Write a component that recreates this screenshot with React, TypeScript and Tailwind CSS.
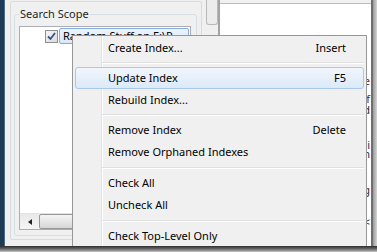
import React from 'react';

const font = { fontFamily: '"Noto Sans", "Open Sans", sans-serif' };

type Entry =
    | { kind: 'item'; label: string; key?: string; h: string; active?: boolean }
    | { kind: 'sep' };

const menuEntries: Entry[] = [
    { kind: 'item', label: 'Create Index...', key: 'Insert', h: 'h-[22px]' },
    { kind: 'sep' },
    { kind: 'item', label: 'Update Index', key: 'F5', h: 'h-[22px]', active: true },
    { kind: 'item', label: 'Rebuild Index...', h: 'h-[22px]' },
    { kind: 'sep' },
    { kind: 'item', label: 'Remove Index', key: 'Delete', h: 'h-[22px]' },
    { kind: 'item', label: 'Remove Orphaned Indexes', h: 'h-[23px]' },
    { kind: 'sep' },
    { kind: 'item', label: 'Check All', h: 'h-[22px]' },
    { kind: 'item', label: 'Uncheck All', h: 'h-[23px]' },
    { kind: 'sep' },
    { kind: 'item', label: 'Check Top-Level Only', h: 'h-[22px]' },
];

// bits of the text pane peeking out from behind the menu
const paneLines = [
    { mt: 'mt-[70px]', text: 'the', color: 'text-[#5b2a12]' },
    { mt: 'mt-[4px]', text: 'of', color: 'text-[#5b2a12]' },
    { mt: 'mt-[-3px]', text: 'and', color: 'text-[#2b2b3a]' },
    { mt: 'mt-[21px]', text: 'iii', color: 'text-[#1f2a5c]' },
    { mt: 'mt-[-5px]', text: 'in', color: 'text-[#1f2a5c]' },
    { mt: 'mt-[22px]', text: 'ng', color: 'text-[#2b2b3a]' },
    { mt: 'mt-[18px]', text: '<', color: 'text-[#1f2a5c]' },
];

function CheckBox() {
    return (
        <div className="w-[13px] h-[13px] border border-[#8e8f8f] bg-gradient-to-br from-[#f4f4f4] to-[#dcdcdc] flex items-center justify-center shrink-0">
            <svg width="9" height="9" viewBox="0 0 9 9">
                <path d="M1 4.5 L3.5 7 L8 1" fill="none" stroke="#3b4f8a" strokeWidth="1.8" />
            </svg>
        </div>
    );
}

function ContextMenu() {
    return (
        <div
            className="absolute left-[72px] top-[35px] w-[295px] h-[211px] overflow-hidden bg-[#f0f0f0] border-t border-l border-r border-[#979797] px-[2px] pt-[1px]"
            style={font}
        >
            {/* gutter line */}
            <div className="absolute left-[28px] top-0 bottom-0 w-[2px] border-l border-[#e2e3e3] bg-white" />
            <div className="relative flex flex-col">
                {menuEntries.map((e, i) =>
                    e.kind === 'sep' ? (
                        <div key={i} className="h-[8px] flex items-center pl-[27px]">
                            <div className="w-full h-[2px] border-t border-[#e0e0e0] bg-white" />
                        </div>
                    ) : (
                        <div
                            key={i}
                            className={`${e.h} flex items-center justify-between pl-[32px] pr-[17px] text-[11px] text-black rounded-[3px] border ${e.active
                                ? 'border-[#aac8ea] bg-gradient-to-b from-[#f1f6fd] to-[#dce9f8]'
                                : 'border-transparent'
                                }`}
                        >
                            <span>{e.label}</span>
                            {e.key && <span>{e.key}</span>}
                        </div>
                    )
                )}
            </div>
        </div>
    );
}

export default function App() {
    return (
        <div className="relative w-[377px] h-[252px] overflow-hidden bg-[#c9c9c9]" style={font}>
            <div className="flex h-[246px]">
                {/* aero frame */}
                <div className="w-[5px] bg-[#1d3a56] border-r border-[#4c6a85]" />

                {/* left panel */}
                <div className="w-[213px] bg-[#f0f0f0] flex items-start">
                    <div className="ml-[5px] mt-[1px] w-[192px] h-[239px] border border-[#dadada] rounded-[2px]">
                        <div className="relative ml-[3px] mt-[12px] w-[183px] h-[222px] border border-[#d5dfe5] rounded-[3px]">
                            <span className="absolute left-[4px] top-[-9px] px-[1px] bg-[#f0f0f0] text-[11px] leading-[16px] text-[#1e1e1e]">
                                Search Scope
                            </span>
                            <div className="ml-[4px] mt-[11px] w-[172px] h-[204px] border border-[#abadb3] bg-white flex flex-col">
                                <div className="flex items-center pt-[1px] h-[17px] ml-[25px]">
                                    <CheckBox />
                                    <div className="ml-[1px] w-[130px] h-[16px] border border-[#84acdd] rounded-[2px] bg-gradient-to-b from-[#ecf4fd] to-[#d9e8fb] pl-[3px] text-[11px] leading-[14px] text-black whitespace-nowrap overflow-hidden">
                                        Random Stuff on E:\P
                                    </div>
                                </div>
                                <div className="flex-1" />
                                {/* horizontal scrollbar */}
                                <div className="h-[16px] flex items-center bg-gradient-to-b from-[#e9e9e9] to-[#f5f5f5] border-t border-[#e2e2e2]">
                                    <div className="w-[19px] flex justify-center">
                                        <svg width="4" height="6" viewBox="0 0 4 6">
                                            <path d="M4 0 L0 3 L4 6 Z" fill="#222" />
                                        </svg>
                                    </div>
                                    <div className="flex-1 h-[15px] border border-[#979797] rounded-[2px] bg-gradient-to-b from-[#f5f5f5] to-[#d6d6d6]" />
                                </div>
                            </div>
                        </div>
                    </div>
                    {/* splitter grip */}
                    <div className="ml-[4px] w-[12px] h-[25px] border border-t-0 border-[#b9b9b9] rounded-b-[3px] bg-[#ececec]" />
                </div>

                <div className="w-[2px] bg-[#a3a3a3]" />

                {/* right pane */}
                <div className="w-[153px] bg-[#f0f0f0] pt-[3px] border-r-2 border-[#6f6f6f]">
                    <div className="h-full bg-white border-t border-[#bcbcbc] overflow-hidden flex flex-col items-end text-[11px] leading-[14px] pr-[1px]">
                        {paneLines.map((l, i) => (
                            <span key={i} className={`${l.mt} ${l.color}`}>{l.text}</span>
                        ))}
                    </div>
                </div>

                {/* drop shadow */}
                <div className="w-[4px] bg-gradient-to-r from-[#9a9a9a] to-[#d6d6d6]" />
            </div>

            {/* bottom frame */}
            <div className="h-[6px] bg-gradient-to-b from-[#2e2e2e] via-[#6a6a6a] to-[#c4c4c4]" />

            <ContextMenu />
        </div>
    );
}
